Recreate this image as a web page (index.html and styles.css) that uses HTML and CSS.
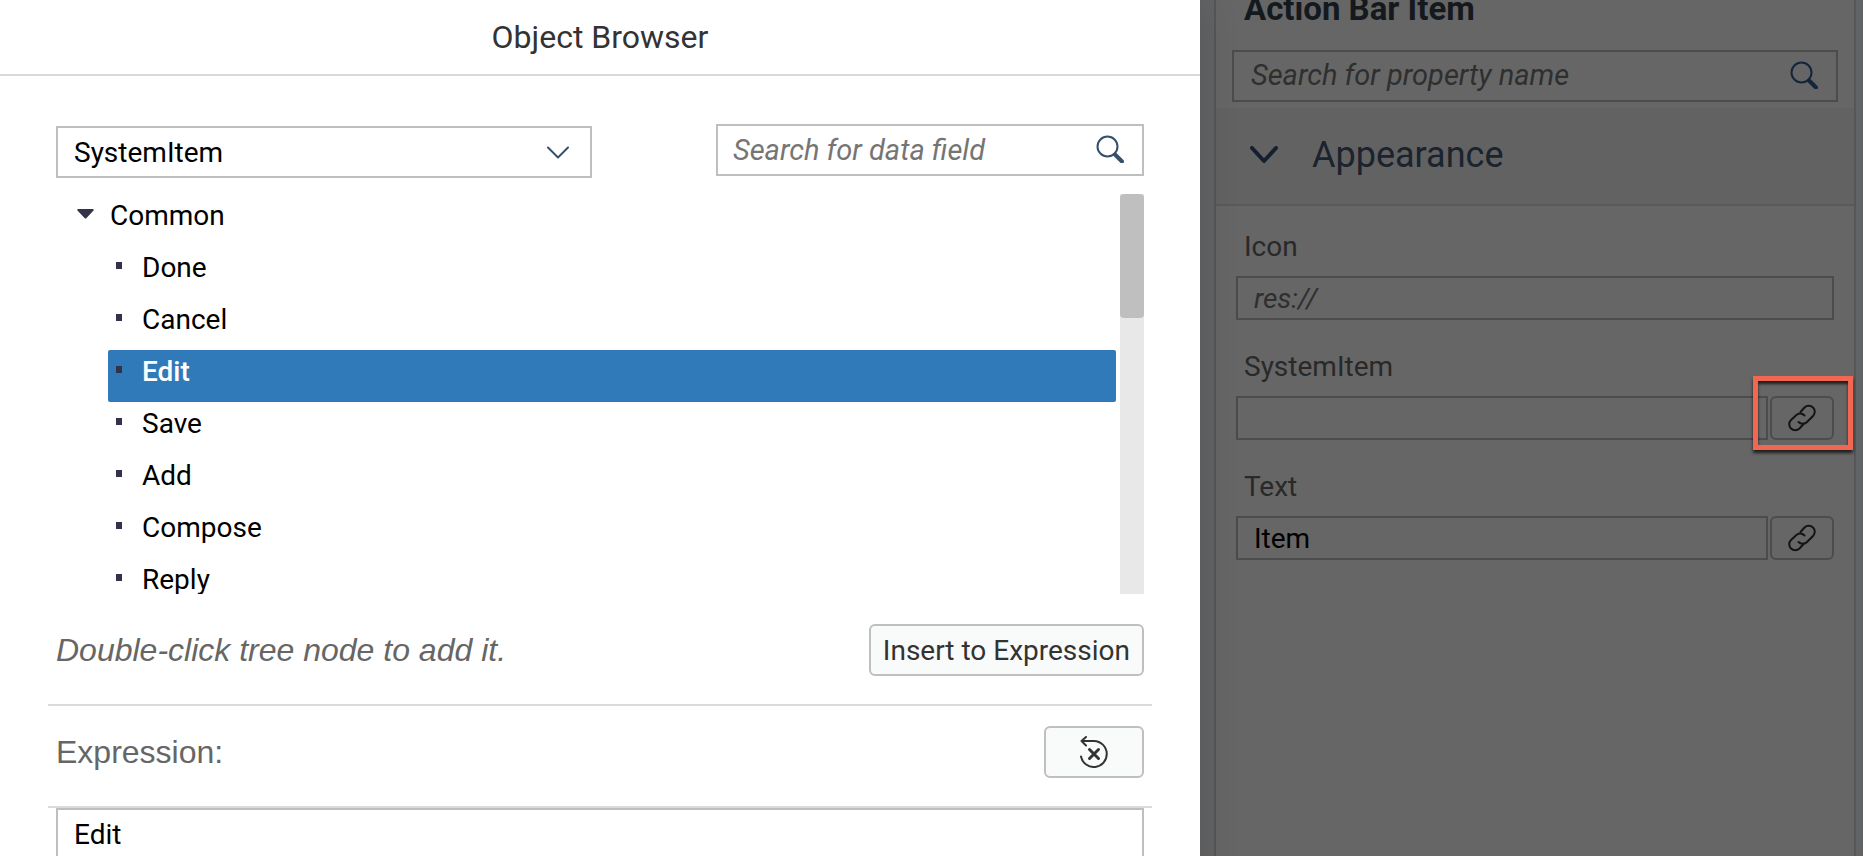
FILE: index.html
```html
<!DOCTYPE html>
<html lang="en">
<head>
<meta charset="utf-8">
<title>Object Browser</title>
<link rel="stylesheet" href="styles.css">
</head>
<body>
<div class="page">
  <main class="dialog">
    <h1 class="dialog-title">Object Browser</h1>
    <div class="dialog-body">
      <div class="filters">
        <div class="select-wrap">
          <select class="select" aria-label="Object type"><option>SystemItem</option></select>
          <svg class="select-arrow" viewBox="0 0 24 16" aria-hidden="true"><path d="M2 2.500 12 12.500 22 2.500"/></svg>
        </div>
        <div class="search search-data">
          <input class="search-input" type="text" placeholder="Search for data field" aria-label="Search for data field">
          <button class="search-btn" type="button" aria-label="Search"><svg viewBox="0 0 28 28"><circle cx="11.500" cy="11.500" r="10"/><path class="handle" d="M19 19.500 26 26.500"/></svg></button>
        </div>
      </div>
      <div class="tree">
        <ul class="tree-list">
          <li class="node"><svg class="caret" viewBox="0 0 16 10" aria-hidden="true"><path d="M0 0H16V1.500L9 9Q8 10 7 9L0 1.500Z"/></svg>Common
          </li>
          <li class="leaf">Done</li>
          <li class="leaf">Cancel</li>
          <li class="leaf selected">Edit</li>
          <li class="leaf">Save</li>
          <li class="leaf">Add</li>
          <li class="leaf">Compose</li>
          <li class="leaf">Reply</li>
        </ul>
        <div class="scrollbar"><div class="thumb"></div></div>
      </div>
      <div class="bar">
        <p class="hint">Double-click tree node to add it.</p>
        <button class="btn" type="button">Insert to Expression</button>
      </div>
      <div class="bar">
        <label class="caption" for="expression">Expression:</label>
        <button class="btn btn-reset" type="button" aria-label="Clear expression"><svg viewBox="0 0 28 32"><path d="M6 1 1.500 5 6 9.500M1.500 5H14A13 13 0 1 1 1 20.500"/><path class="cross" d="M9.500 13.500 18.500 22.500M18.500 13.500 9.500 22.500"/></svg></button>
      </div>
      <textarea class="expression" id="expression">Edit</textarea>
    </div>
  </main>

  <aside class="backdrop">
    <section class="panel">
      <div class="panel-head">
        <h2 class="panel-title">Action Bar Item</h2>
        <div class="search search-dim">
          <input class="search-input" type="text" placeholder="Search for property name" aria-label="Search for property name">
          <button class="search-btn" type="button" aria-label="Search"><svg viewBox="0 0 28 28"><circle cx="11.500" cy="11.500" r="10"/><path class="handle" d="M19 19.500 26 26.500"/></svg></button>
        </div>
      </div>
      <button class="section-head" type="button"><svg viewBox="0 0 28 18" aria-hidden="true"><path d="M2 2 14 15 26 2"/></svg>Appearance</button>
      <div class="fields">
        <div class="field">
          <label class="label" for="icon">Icon</label>
          <div class="control"><input class="input" id="icon" type="text" placeholder="res://"></div>
        </div>
        <div class="field">
          <label class="label" for="system-item">SystemItem</label>
          <div class="control">
            <input class="input" id="system-item" type="text">
            <button class="link-btn" type="button" aria-label="Bind SystemItem"><svg viewBox="0 0 28 28"><path d="M12.500 8 16.500 3.500A6 6 0 0 1 25 12L19 18A6 6 0 0 1 10.500 18"/><path d="M15.500 20 11.500 24.500A6 6 0 0 1 3 16L9 10.500A6 6 0 0 1 16.500 11.500"/></svg></button>
            <span class="highlight"></span>
          </div>
        </div>
        <div class="field">
          <label class="label" for="text">Text</label>
          <div class="control">
            <input class="input" id="text" type="text" value="Item">
            <button class="link-btn" type="button" aria-label="Bind Text"><svg viewBox="0 0 28 28"><path d="M12.500 8 16.500 3.500A6 6 0 0 1 25 12L19 18A6 6 0 0 1 10.500 18"/><path d="M15.500 20 11.500 24.500A6 6 0 0 1 3 16L9 10.500A6 6 0 0 1 16.500 11.500"/></svg></button>
          </div>
        </div>
      </div>
    </section>
  </aside>
</div>
</body>
</html>
```

FILE: styles.css
```css
* { box-sizing: border-box; }

body {
  margin: 0;
  background: #666;
  color: #000;
  font-family: Roboto, "Liberation Sans", sans-serif;
  font-size: 28px;
}

button, input, select, textarea { font: inherit; color: inherit; }
h1, h2, p, ul { margin: 0; padding: 0; }
svg { display: block; fill: none; stroke: currentColor; stroke-width: 2; stroke-linecap: round; stroke-linejoin: round; }

.page {
  display: grid;
  grid-template-columns: minmax(0, 1200fr) minmax(0, 663fr);
  height: 100vh;
  overflow: hidden;
}

/* Dialog */
.dialog { background: #fff; z-index: 1; box-shadow: 0 0 40px rgba(0, 0, 0, .12); overflow: clip; }
.dialog-title {
  border-bottom: 2px solid #d9d9d9;
  color: #333;
  font-size: 32px;
  font-weight: 400;
  line-height: 74px;
  text-align: center;
}
.dialog-body { padding: 48px 48px 0; }
.filters { display: flex; align-items: flex-start; justify-content: space-between; padding: 0 8px; }

.select-wrap { position: relative; width: 536px; margin-top: 2px; }
.select {
  appearance: none;
  width: 100%;
  height: 52px;
  padding: 0 60px 0 16px;
  border: 2px solid #bfbfbf;
  border-radius: 0;
  background: #fff;
}
.select-arrow { position: absolute; right: 22px; top: 19px; width: 24px; height: 16px; color: #35506b; pointer-events: none; }

.search { display: flex; height: 52px; border: 2px solid #bfbfbf; background: #fff; }
.search-data { width: 428px; color: #35506b; }
.search-input { flex: 1; min-width: 0; padding: 0 0 0 15px; border: 0; background: none; outline: 0; font-size: 29px; }
.search-input::placeholder { color: #757575; font-style: italic; opacity: 1; }
.search-btn { padding: 0 18px 2px 12px; border: 0; background: none; }
.search-btn svg { width: 28px; height: 28px; }
.handle { stroke-width: 4; }

.tree { display: flex; gap: 4px; height: 400px; margin: 16px 8px 30px; overflow: hidden; }
.tree-list { flex: 1; list-style: none; }
.node, .leaf { display: flex; height: 52px; line-height: 44px; }
.node { gap: 16px; padding-left: 21px; }
.caret { width: 17px; height: 10px; margin-top: 15px; fill: #32324b; stroke: none; }
.leaf { margin-left: 52px; padding-left: 8px; border-radius: 2px; }
.leaf::before { content: ""; width: 6px; height: 7px; margin: 16px 20px 0 0; background: #32324b; }
.selected { background: #317ab9; color: #fff; font-weight: 500; }
.scrollbar { width: 24px; background: #e8e8e8; }
.thumb { height: 124px; border-radius: 4px; background: #bfbfbf; }

.bar { display: flex; align-items: center; justify-content: space-between; padding: 0 8px 28px; border-bottom: 2px solid #d9d9de; }
.bar + .bar { padding-top: 20px; }
.hint, .caption { color: #666; font: 32px/52px "Liberation Sans", Arial, sans-serif; }
.hint { font-style: italic; }
.btn { height: 52px; padding: 0 12px; border: 2px solid #bfbfbf; border-radius: 6px; background: #f9fafa; color: #333; }
.btn-reset { width: 100px; padding: 0 34px; }
.btn-reset svg { width: 28px; height: 32px; }
.cross { stroke-width: 3; }
.expression {
  display: block;
  width: calc(100% - 16px);
  height: 160px;
  margin: 0 8px;
  padding: 8px 16px;
  border: 2px solid #bfbfbf;
  outline: 0;
  resize: none;
}

/* Dimmed property panel */
.backdrop { padding: 0 7px 0 14px; background: #626364; }
.panel { height: 100%; border: solid #565656; border-width: 0 2px; background: #666; }
.panel-head { padding: 0 16px 6px; }
.panel-title { height: 50px; padding-left: 12px; color: #14191e; font-size: 33px; font-weight: 700; line-height: 18px; }
.search-dim { background: #666; border-color: #4c4c4c; color: #14253a; }
.search-dim .search-input { padding: 0 0 3px 17px; }
.search-dim .search-input::placeholder, .input::placeholder { color: #2f2f2f; font-style: italic; opacity: 1; }

.section-head {
  display: flex;
  align-items: center;
  gap: 34px;
  width: 100%;
  height: 98px;
  padding: 0 34px 2px;
  border: 0;
  border-bottom: 2px solid #5a5a5a;
  background: #626262;
  color: #1a232e;
  font-size: 36px;
  text-align: left;
}
.section-head svg { width: 28px; height: 18px; color: #14202e; stroke-width: 4; }

.fields { display: flex; flex-direction: column; gap: 24px; padding: 18px 20px; }
.label { display: block; height: 52px; padding-left: 8px; color: #292929; line-height: 46px; }
.control { position: relative; display: flex; gap: 2px; }
.input { flex: 1; min-width: 0; height: 44px; padding: 0 16px; border: 2px solid #4c4c4c; background: #666; outline: 0; color: #000; }
.link-btn { width: 64px; height: 44px; padding: 0 16px; border: 2px solid #4c4c4c; border-radius: 6px; background: #666; color: #141414; }
.link-btn svg { width: 28px; height: 28px; }
.highlight {
  position: absolute;
  right: -19px;
  top: -20px;
  width: 100px;
  height: 74px;
  border: 5px solid #f26652;
  box-shadow: 0 3px 3px rgba(0, 0, 0, .7), inset 0 3px 3px rgba(0, 0, 0, .7);
  pointer-events: none;
}
```
